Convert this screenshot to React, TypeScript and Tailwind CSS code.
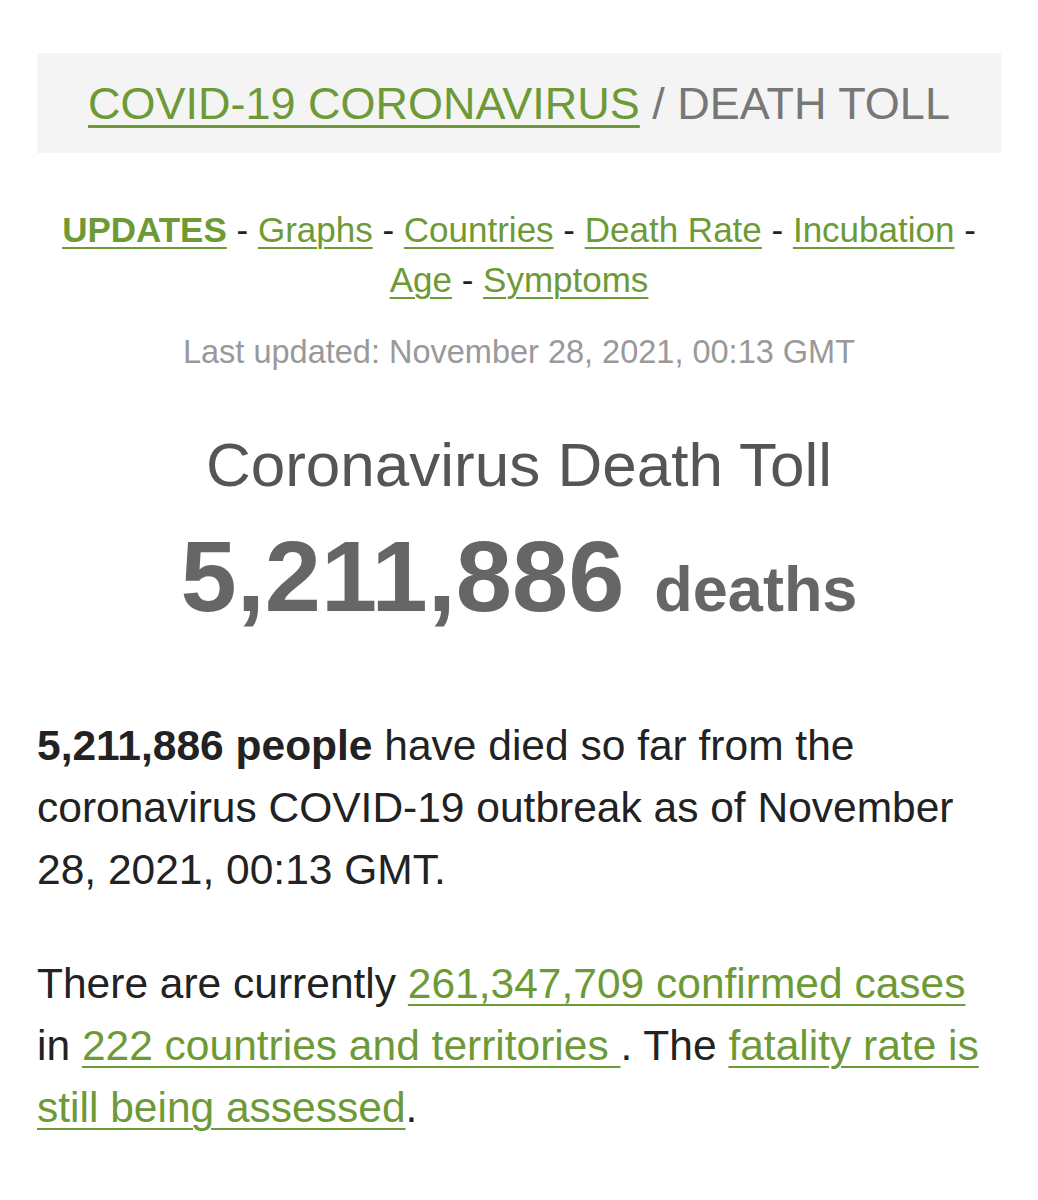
import React from "react";

const green = "text-[#6d9a36]";

function NavLink({ children, bold }: { children: React.ReactNode; bold?: boolean }) {
  return (
    <a href="#" className={`${green} underline underline-offset-[5px] decoration-2 ${bold ? "font-bold" : ""}`}>
      {children}
    </a>
  );
}

function Link({ children }: { children: React.ReactNode }) {
  return (
    <a href="#" className={`${green} underline underline-offset-[6px] decoration-2`}>
      {children}
    </a>
  );
}

export default function App() {
  return (
    <div className="min-h-[1200px] bg-white px-[37px] pt-[53px] font-['Liberation_Sans',Arial,sans-serif]">
      <div className="flex h-[100px] items-center justify-center bg-[#f4f4f4] pt-[1px] text-[45px]">
        <a href="#" className={`${green} underline underline-offset-[6px] decoration-[3px]`}>
          COVID-19 CORONAVIRUS
        </a>
        <span className="text-[#777]">&nbsp;/ DEATH TOLL</span>
      </div>

      <nav className="mt-[52px] text-center text-[35px] leading-[50px] text-[#222]">
        <NavLink bold>UPDATES</NavLink> - <NavLink>Graphs</NavLink> - <NavLink>Countries</NavLink> -{" "}
        <NavLink>Death Rate</NavLink> - <NavLink>Incubation</NavLink> - <NavLink>Age</NavLink> -{" "}
        <NavLink>Symptoms</NavLink>
      </nav>

      <p className="mt-[22px] text-center text-[32.5px] leading-[50px] text-[#999]">
        Last updated: November 28, 2021, 00:13 GMT
      </p>

      <h1 className="mt-[52px] text-center text-[62px] leading-[72px] text-[#555]">Coronavirus Death Toll</h1>
      <div className="mt-[20px] text-center font-bold leading-[110px] text-[#666]">
        <span className="text-[101px]">5,211,886</span>
        <span className="ml-[30px] text-[63px]">deaths</span>
      </div>

      <p className="mt-[54px] text-[42.5px] leading-[62px] text-[#222]">
        <strong>5,211,886 people</strong> have died so far from the coronavirus COVID-19 outbreak as of November 28,
        2021, 00:13 GMT.
      </p>

      <p className="mt-[52px] text-[42.5px] leading-[62px] text-[#222]">
        There are currently <Link>261,347,709 confirmed cases</Link> in <Link>222 countries and territories </Link>.
        The <Link>fatality rate is still being assessed</Link>.
      </p>
    </div>
  );
}
